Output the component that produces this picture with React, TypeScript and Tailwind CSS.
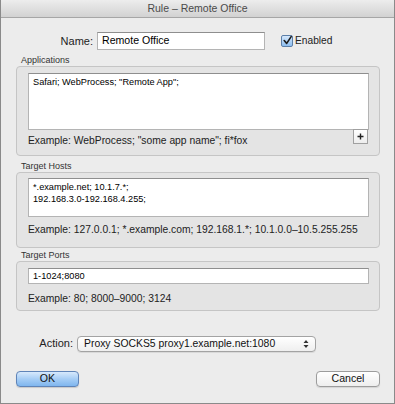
import type { FC, ReactNode } from 'react'

const ui = "font-['Liberation_Sans',Arial,sans-serif]"

const GroupLabel: FC<{ children: ReactNode; className?: string }> = ({ children, className = '' }) => (
  <div className={`pl-[5px] text-[9px] leading-[11px] text-[#333] ${className}`}>{children}</div>
)

const Group: FC<{ children: ReactNode; className?: string }> = ({ children, className = '' }) => (
  <div className={`rounded-[4px] border border-[#c5c5c5] bg-[#e4e4e4] pl-[11px] pr-[10px] ${className}`}>
    {children}
  </div>
)

const Field: FC<{ children: ReactNode; className?: string }> = ({ children, className = '' }) => (
  <div
    className={`bg-white border border-[#b4b4b4] border-t-[#8e8e8e] px-[4px] text-[9.2px] leading-[12px] text-black ${className}`}
  >
    {children}
  </div>
)

const Example: FC<{ children: ReactNode; className?: string }> = ({ children, className = '' }) => (
  <div className={`whitespace-nowrap text-[10.3px] leading-[13px] text-[#222] ${className}`}>{children}</div>
)

const App: FC = () => {
  return (
    <div className={`w-[395px] h-[404px] flex flex-col bg-[#ececec] border-x border-b border-[#8a8a8a] ${ui} text-black`}>
      {/* Title bar */}
      <div className="h-[18px] shrink-0 flex items-center justify-center bg-gradient-to-b from-[#ededed] to-[#d2d2d2] border-b border-[#a6a6a6] text-[10.5px] text-[#4a4a4a]">
        Rule – Remote Office
      </div>

      <div className="flex flex-col pl-[15px] pr-[14px]">
        {/* Name row */}
        <div className="flex items-center h-[18px] mt-[14px]">
          <div className="w-[77px] text-right text-[11px] text-[#222]">Name:</div>
          <div className="ml-[4px] w-[168px] h-[18px] bg-white border border-[#b4b4b4] border-t-[#8e8e8e] pl-[4px] flex items-center text-[10.6px]">
            Remote Office
          </div>
          <div className="ml-[16px] w-[12px] h-[12px] rounded-[2px] border border-[#5c7fa8] bg-gradient-to-b from-[#d6e8fb] to-[#8dbef0] flex items-center justify-center">
            <svg width="11" height="11" viewBox="0 0 11 11" className="-mt-[2px] ml-[1px]">
              <path d="M1.5 5.5 L4.5 9 L10 0.8" fill="none" stroke="#1c1c1c" strokeWidth="2" strokeLinecap="round" strokeLinejoin="round" />
            </svg>
          </div>
          <div className="ml-[2px] text-[10.2px] text-[#222]">Enabled</div>
        </div>

        {/* Applications */}
        <GroupLabel className="mt-[5px]">Applications</GroupLabel>
        <Group className="pt-[6px] pb-[9px]">
          <Field className="h-[57px] pt-[2px]">Safari; WebProcess; "Remote App";</Field>
          <div className="flex justify-between items-start h-[16px]">
            <Example className="pt-[4px]">Example: WebProcess; "some app name"; fi*fox</Example>
            <div className="-mt-[1px] mr-[1px] w-[15px] h-[15px] bg-gradient-to-b from-white to-[#ededed] border border-[#a0a0a0] flex items-center justify-center">
              <svg width="7" height="7" viewBox="0 0 7 7">
                <path d="M3.5 0.5 V6.5 M0.5 3.5 H6.5" stroke="#222" strokeWidth="1.4" />
              </svg>
            </div>
          </div>
        </Group>

        {/* Target Hosts */}
        <GroupLabel className="mt-[5px]">Target Hosts</GroupLabel>
        <Group className="pt-[5px] pb-[11px]">
          <Field className="h-[39px] pt-[2px]">
            *.example.net; 10.1.7.*;
            <br />
            192.168.3.0-192.168.4.255;
          </Field>
          <Example className="mt-[6px]">Example: 127.0.0.1; *.example.com; 192.168.1.*; 10.1.0.0–10.5.255.255</Example>
        </Group>

        {/* Target Ports */}
        <GroupLabel className="mt-[2px]">Target Ports</GroupLabel>
        <Group className="pt-[6px] pb-[5px]">
          <Field className="h-[16px] flex items-center">1-1024;8080</Field>
          <Example className="mt-[8px]">Example: 80; 8000–9000; 3124</Example>
        </Group>

        {/* Action */}
        <div className="flex items-center mt-[25px] h-[15px]">
          <div className="w-[57px] text-right text-[11px] text-[#222]">Action:</div>
          <div className="ml-[4px] w-[239px] h-[16px] rounded-[4px] border border-[#a3a3a3] bg-gradient-to-b from-white to-[#efefef] shadow-[0_1px_0_rgba(0,0,0,0.08)] flex items-center justify-between pl-[6px] pr-[6px] text-[10.4px] text-[#111]">
            <span>Proxy SOCKS5 proxy1.example.net:1080</span>
            <svg width="6" height="10" viewBox="0 0 6 10">
              <path d="M0.5 4 L3 1 L5.5 4 Z M0.5 6 L3 9 L5.5 6 Z" fill="#333" />
            </svg>
          </div>
        </div>

        {/* Buttons */}
        <div className="flex justify-between mt-[20px]">
          <div className="w-[63px] h-[16px] rounded-[4px] border border-[#5f84b8] bg-gradient-to-b from-[#d7e9fc] via-[#a6cdf5] to-[#7fb6ee] shadow-[0_1px_1px_rgba(0,0,0,0.15)] flex items-center justify-center text-[10.6px] text-[#111]">
            OK
          </div>
          <div className="w-[64px] h-[16px] rounded-[4px] border border-[#9c9c9c] bg-gradient-to-b from-white to-[#eeeeee] shadow-[0_1px_1px_rgba(0,0,0,0.1)] flex items-center justify-center text-[10.6px] text-[#111]">
            Cancel
          </div>
        </div>
      </div>
    </div>
  )
}

export default App
